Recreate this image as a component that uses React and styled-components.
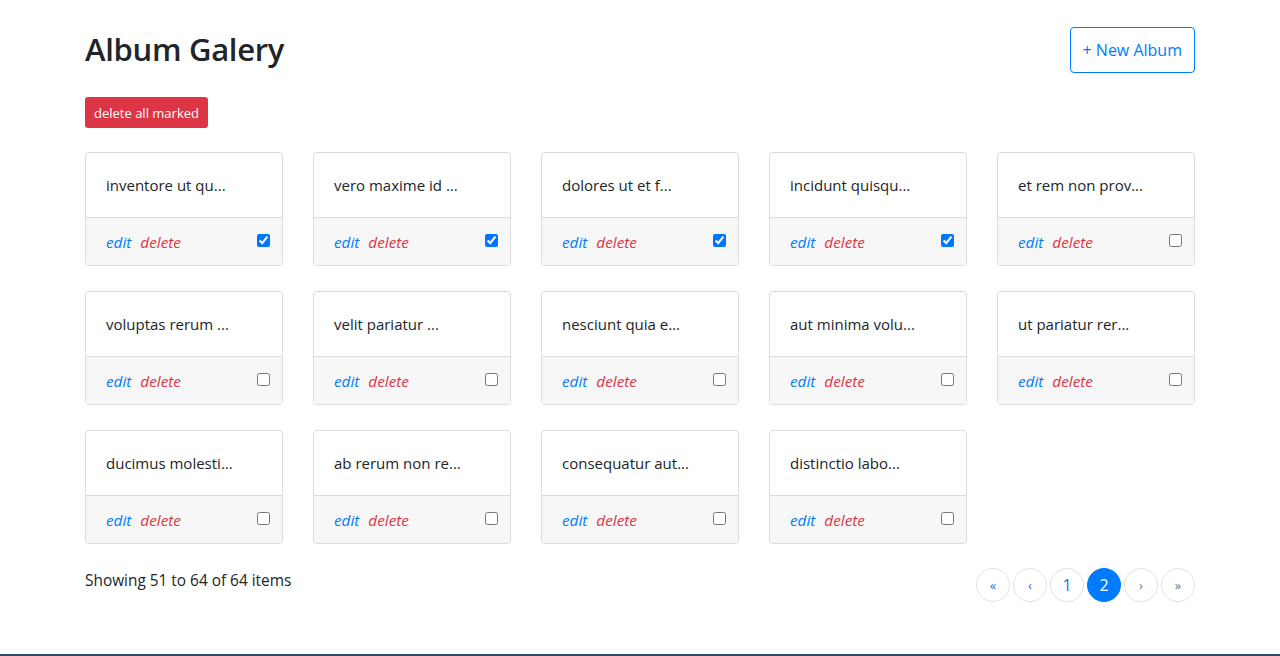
import React from 'react';
import styled, { createGlobalStyle } from 'styled-components';

const GlobalStyle = createGlobalStyle`
    body {
        margin: 0;
        background: #fff;
        color: #212529;
        font-family: "Open Sans", "Noto Sans", sans-serif;
        font-size: 16px;
    }
`

const Page = styled.div`
    height: 656px;
    display: flex;
    flex-direction: column;
`

const Container = styled.div`
    width: 1110px;
    margin: 0 auto;
    padding-top: 27px;
    flex: 1;
`

const Header = styled.div`
    display: flex;
    justify-content: space-between;
    align-items: flex-start;
`

const Title = styled.h1`
    margin: 0;
    padding-top: 2px;
    font-size: 31px;
    font-weight: 600;
    line-height: 40px;
    letter-spacing: -0.3px;
`

const OutlineButton = styled.button`
    height: 46px;
    padding: 0 12px;
    font-family: inherit;
    font-size: 16px;
    color: #007bff;
    background: #fff;
    border: 1px solid #007bff;
    border-radius: 4px;
`

const DangerButton = styled.button`
    margin-top: 28px;
    height: 31px;
    padding: 0 9px;
    font-family: inherit;
    font-size: 13px;
    color: #fff;
    background: #dc3545;
    border: none;
    border-radius: 3px;
`

const Grid = styled.div`
    margin-top: 24px;
    display: grid;
    grid-template-columns: repeat(5, 198px);
    column-gap: 30px;
    row-gap: 25px;
`

const Card = styled.div`
    border: 1px solid #dcdcdc;
    border-radius: 4px;
    overflow: hidden;
`

const CardBody = styled.div`
    height: 64px;
    padding: 0 20px;
    display: flex;
    align-items: center;
    font-size: 15px;
    white-space: pre;
`

const CardFooter = styled.div`
    height: 47px;
    padding: 0 12px 0 20px;
    display: flex;
    align-items: center;
    gap: 9px;
    background: #f7f7f7;
    border-top: 1px solid #dcdcdc;
    font-size: 15.3px;
    font-style: italic;
`

const Link = styled.span`
    color: ${p => p.danger ? '#dc3545' : '#007bff'};
`

const Check = styled.input`
    margin: 0 0 2px auto;
    width: 13px;
    height: 13px;
`

const Bottom = styled.div`
    margin-top: 24px;
    display: flex;
    justify-content: space-between;
    align-items: flex-start;
`

const Info = styled.div`
    padding-top: 2px;
    font-size: 15.4px;
`

const Pager = styled.div`
    display: flex;
    gap: 3px;
`

const PageButton = styled.div`
    width: 32px;
    height: 32px;
    border-radius: 50%;
    display: flex;
    align-items: center;
    justify-content: center;
    font-size: ${p => p.arrow ? '13px' : '16px'};
    color: ${p => p.active ? '#fff' : p.disabled ? '#6c757d' : '#007bff'};
    background: ${p => p.active ? '#007bff' : '#fff'};
    border: 1px solid ${p => p.active ? '#007bff' : '#dee2e6'};
`

const TaskStrip = styled.div`
    height: 2px;
    background: #2d4a6a;
`

const albums = [
    'inventore ut qu', 'vero maxime id ', 'dolores ut et f', 'incidunt quisqu', 'et rem non prov',
    'voluptas rerum ', 'velit pariatur ', 'nesciunt quia e', 'aut minima volu', 'ut pariatur rer',
    'ducimus molesti', 'ab rerum non re', 'consequatur aut', 'distinctio labo',
]

const App = () => {
    const cards = albums.map((title, i) => (
        <Card key={i}>
            <CardBody>{title}...</CardBody>
            <CardFooter>
                <Link>edit</Link>
                <Link danger>delete</Link>
                <Check type="checkbox" defaultChecked={i < 4} />
            </CardFooter>
        </Card>
    ))

    return (
        <Page>
            <GlobalStyle />
            <Container>
                <Header>
                    <div>
                        <Title>Album Galery</Title>
                        <DangerButton>delete all marked</DangerButton>
                    </div>
                    <OutlineButton>+ New Album</OutlineButton>
                </Header>
                <Grid>{cards}</Grid>
                <Bottom>
                    <Info>Showing 51 to 64 of 64 items</Info>
                    <Pager>
                        <PageButton arrow>«</PageButton>
                        <PageButton arrow>‹</PageButton>
                        <PageButton>1</PageButton>
                        <PageButton active>2</PageButton>
                        <PageButton arrow disabled>›</PageButton>
                        <PageButton arrow disabled>»</PageButton>
                    </Pager>
                </Bottom>
            </Container>
            <TaskStrip />
        </Page>
    )
}

export default App;
